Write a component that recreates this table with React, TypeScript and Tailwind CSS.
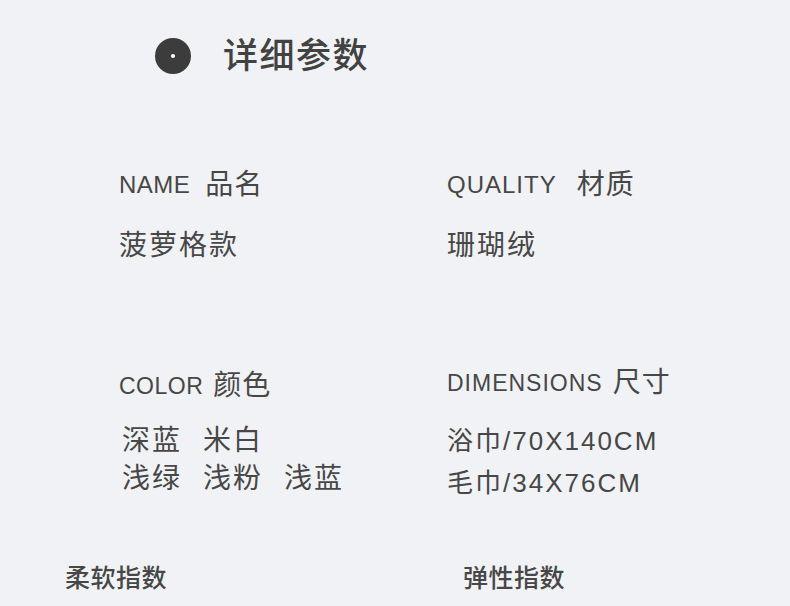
import React from "react";

const font = { fontFamily: '"Liberation Sans", "Noto Sans CJK SC", sans-serif' };

export default function App() {
  const colors1 = ["深蓝", "米白"];
  const colors2 = ["浅绿", "浅粉", "浅蓝"];

  return (
    <div
      className="w-[790px] h-[606px] overflow-hidden bg-[#f1f2f6] text-[#474747] pt-[38px]"
      style={font}
    >
      {/* Header */}
      <div className="h-[36px] flex items-center pl-[155px]">
        <div className="w-[36px] h-[36px] rounded-full bg-[#3c3c3c] flex items-center justify-center">
          <div className="w-[4px] h-[4px] rounded-full bg-white" />
        </div>
        <h1 className="ml-[32px] text-[35px] leading-[36px] font-medium tracking-[1.5px] text-[#424242]">
          详细参数
        </h1>
      </div>

      {/* Name / Quality */}
      <div className="grid grid-cols-[328px_1fr] pl-[119px] mt-[96px]">
        <div>
          <div className="h-[30px] flex items-center">
            <span className="text-[24px] tracking-[0.5px]">NAME</span>
            <span className="ml-[15px] text-[28px] tracking-[1px]">品名</span>
          </div>
          <div className="mt-[28px] text-[28px] leading-[36px] tracking-[2px]">菠萝格款</div>
        </div>
        <div>
          <div className="h-[30px] flex items-center">
            <span className="text-[24px] tracking-[1px]">QUALITY</span>
            <span className="ml-[20px] text-[28px] tracking-[1px]">材质</span>
          </div>
          <div className="mt-[28px] text-[28px] leading-[36px] tracking-[2px]">珊瑚绒</div>
        </div>
      </div>

      {/* Color / Dimensions */}
      <div className="grid grid-cols-[328px_1fr] pl-[119px] mt-[104px]">
        <div className="pt-[3px]">
          <div className="h-[30px] flex items-center">
            <span className="text-[23px] tracking-[0.5px]">COLOR</span>
            <span className="ml-[10px] text-[28px] tracking-[1px]">颜色</span>
          </div>
          <div className="mt-[21px] pl-[3px] text-[28px] leading-[38px] tracking-[2px]">
            <div className="flex gap-[21px]">
              {colors1.map((c) => (
                <span key={c}>{c}</span>
              ))}
            </div>
            <div className="flex gap-[21px]">
              {colors2.map((c) => (
                <span key={c}>{c}</span>
              ))}
            </div>
          </div>
        </div>
        <div>
          <div className="h-[30px] flex items-center">
            <span className="text-[23px] tracking-[1px]">DIMENSIONS</span>
            <span className="ml-[10px] text-[28px] tracking-[1px]">尺寸</span>
          </div>
          <div className="mt-[22px] text-[26px] leading-[42px] tracking-[2px]">
            <div>浴巾/70X140CM</div>
            <div>毛巾/34X76CM</div>
          </div>
        </div>
      </div>

      {/* Bottom */}
      <div className="grid grid-cols-[398px_1fr] pl-[65px] mt-[58px]">
        <div className="h-[30px] pt-[3px] flex items-center text-[25px] font-medium tracking-[0.5px]">柔软指数</div>
        <div className="h-[30px] pt-[3px] flex items-center text-[25px] font-medium tracking-[0.5px]">弹性指数</div>
      </div>
    </div>
  );
}
